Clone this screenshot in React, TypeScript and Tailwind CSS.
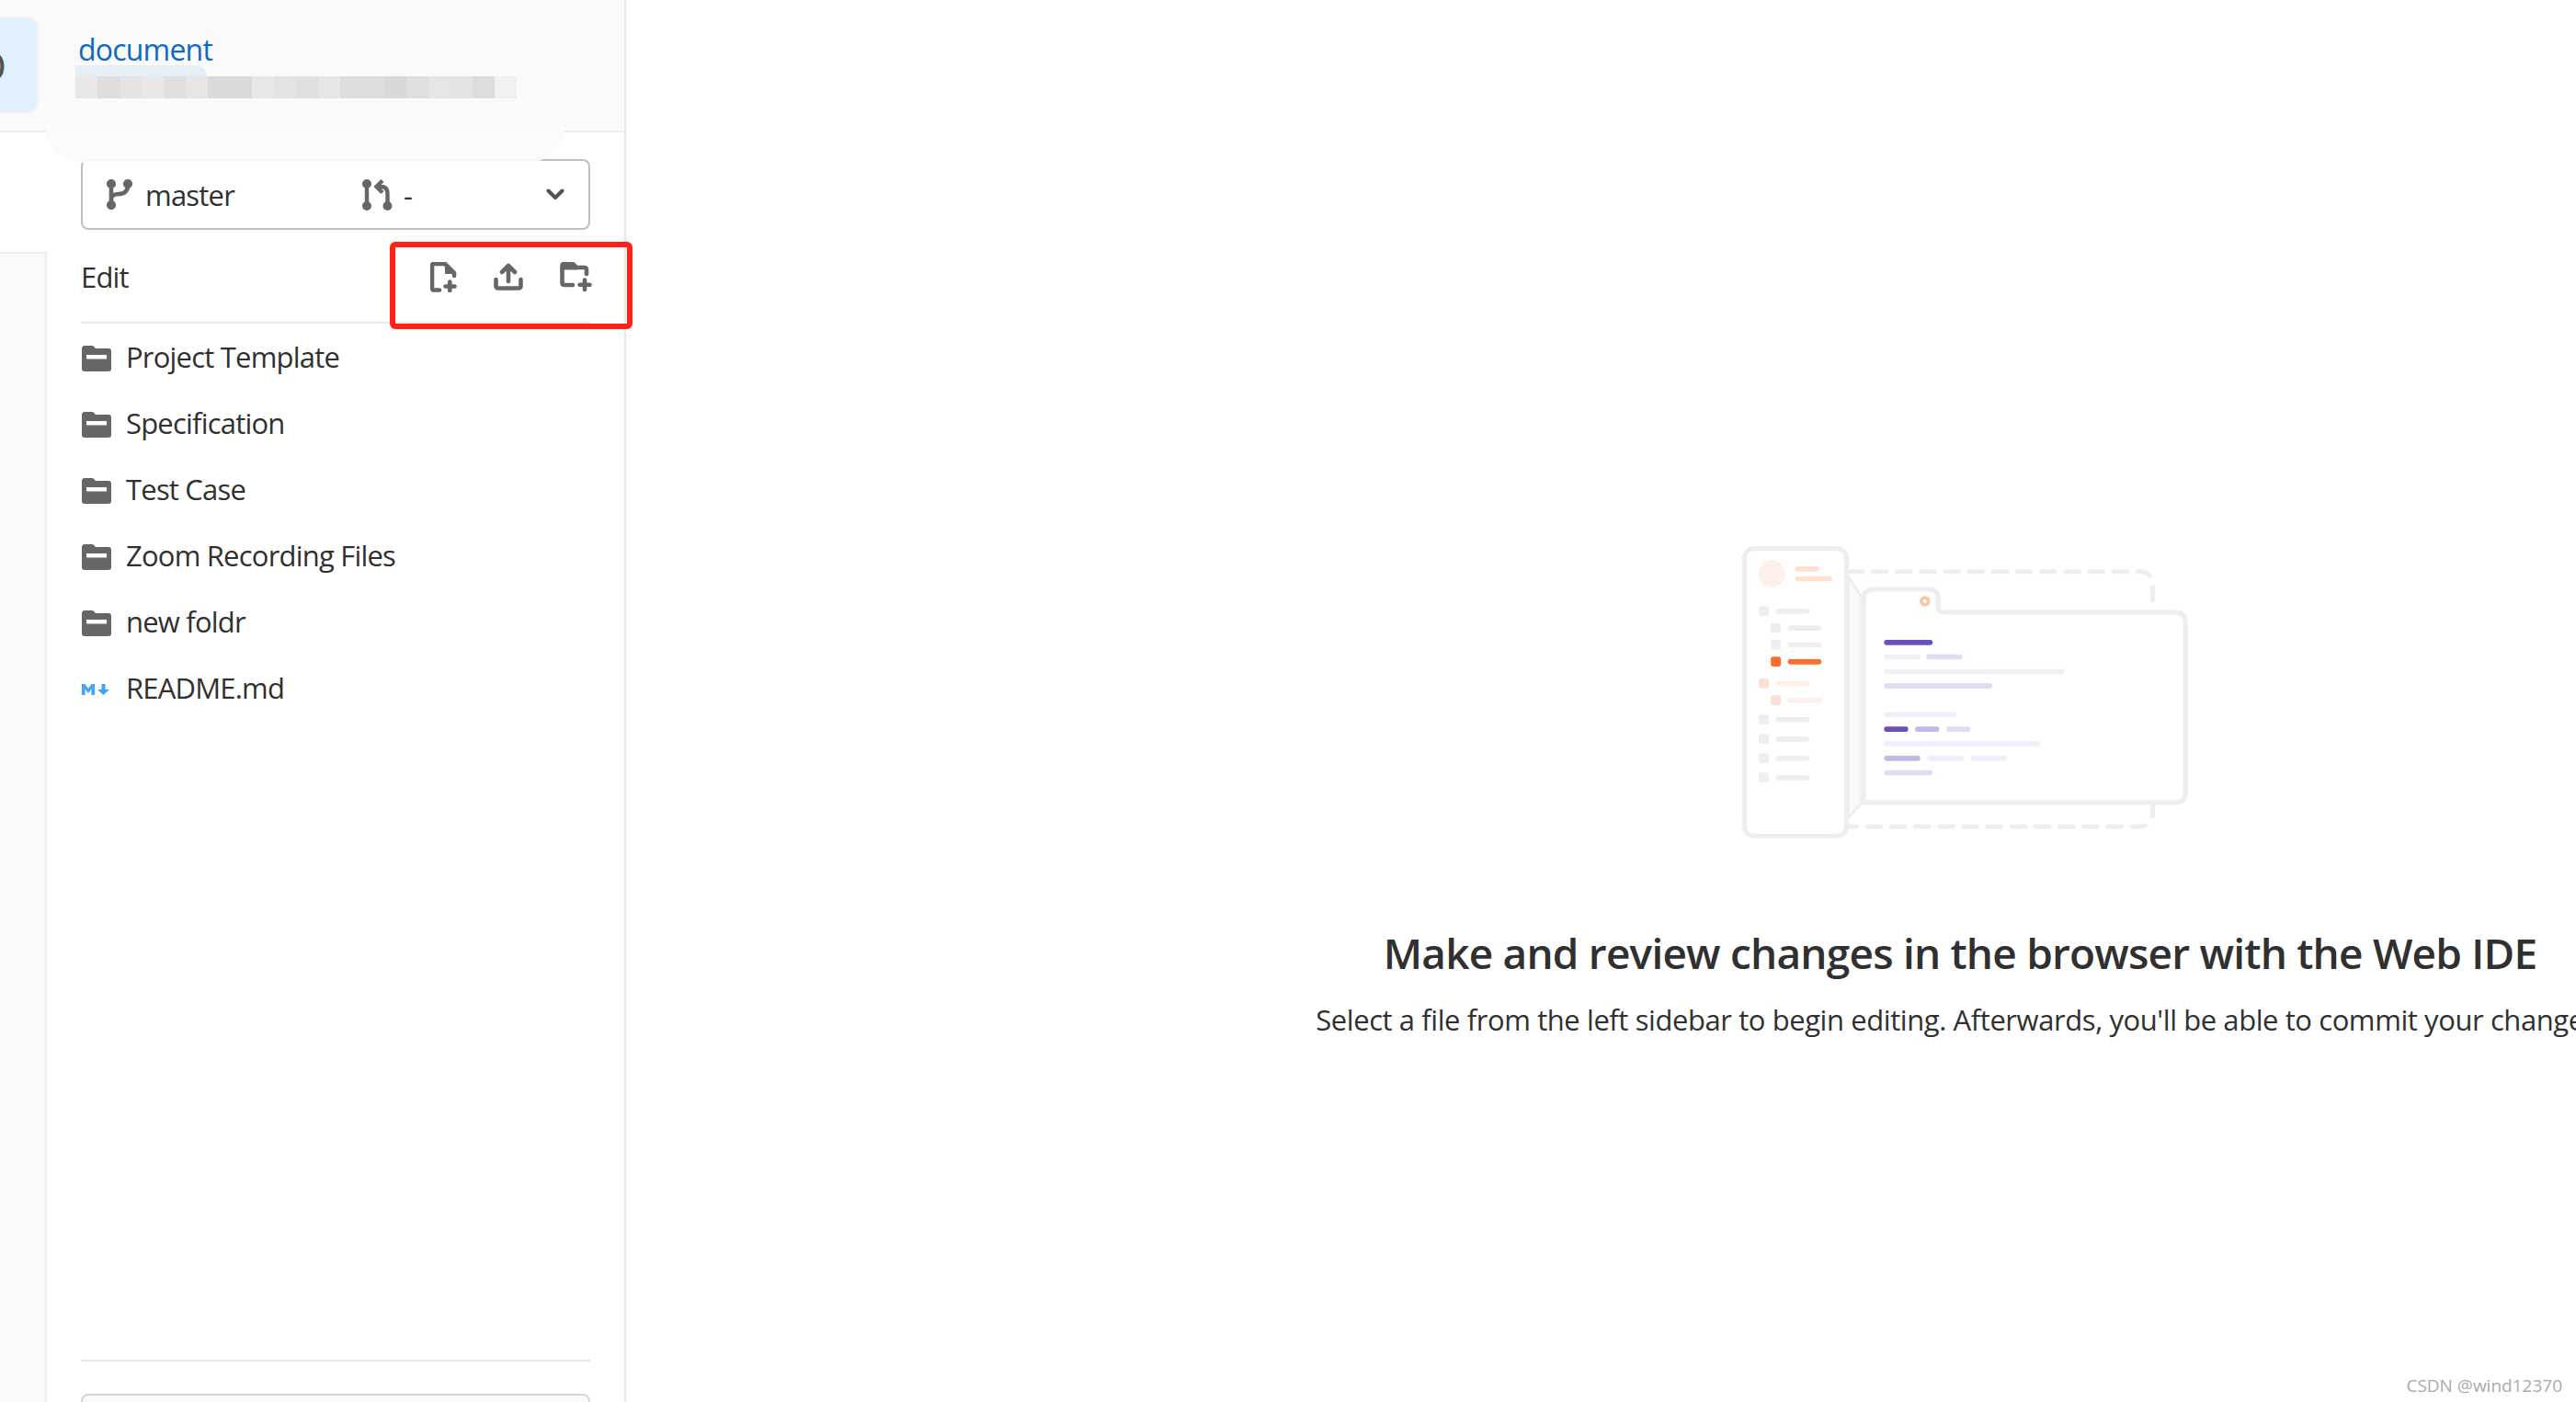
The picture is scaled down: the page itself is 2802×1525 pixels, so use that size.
const files = ['Project Template', 'Specification', 'Test Case', 'Zoom Recording Files', 'new foldr'];

const pixels = [
  '#e8e8e8', '#dedede', '#e4e4e4', '#e8e8e8', '#e0e0e0', '#e6e6e6', '#d9dadb', '#d9dadb', '#e8e8e8', '#e3e3e3',
  '#e0e0e0', '#e6e6e6', '#dddddd', '#dddddd', '#d9d8d6', '#dfdfdd', '#e5e5e3', '#e3e3e1', '#dddddb', '#f0f1f3',
];

// bars of the illustration, in the 1568x1080 space of the svg: x, y, width, colour
const bars: [number, number, number, string][] = [
  [240, 138, 76, '#fde0d3'],
  [240, 170, 117, '#fde0d3'],
  [179, 276, 106, '#eeeeee'],
  [217, 331, 106, '#eeeeee'],
  [217, 386, 106, '#eeeeee'],
  [217, 441, 106, '#ff6d2a'],
  [179, 512, 106, '#fdf0ea'],
  [217, 567, 106, '#fdf0ea'],
  [179, 630, 106, '#eeeeee'],
  [179, 693, 106, '#eeeeee'],
  [179, 756, 106, '#eeeeee'],
  [179, 819, 106, '#eeeeee'],
  [521, 378, 153, '#6b4fbb'],
  [521, 425, 114, '#f0eef9'],
  [654, 425, 114, '#e1dcf1'],
  [521, 473, 570, '#f0eef9'],
  [521, 520, 342, '#e1dcf1'],
  [521, 614, 228, '#f0eef9'],
  [521, 661, 76, '#6b4fbb'],
  [619, 661, 76, '#c3b8e3'],
  [718, 661, 76, '#e1dcf1'],
  [521, 708, 494, '#f0eef9'],
  [521, 756, 114, '#c3b8e3'],
  [658, 756, 114, '#f0eef9'],
  [795, 756, 114, '#f0eef9'],
  [521, 803, 153, '#e1dcf1'],
];

const squares: [number, number, string][] = [
  [125, 268, '#eeeeee'],
  [163, 323, '#eeeeee'],
  [163, 378, '#eeeeee'],
  [163, 433, '#ff6d2a'],
  [125, 504, '#fde0d3'],
  [163, 559, '#fde0d3'],
  [125, 622, '#eeeeee'],
  [125, 685, '#eeeeee'],
  [125, 748, '#eeeeee'],
  [125, 811, '#eeeeee'],
];

const Illustration = () => (
  <svg className="ml-[16px] h-[360px] w-[540px] shrink-0" viewBox="0 0 1568 1080" preserveAspectRatio="none" fill="none">
    <path d="M408 170L450 240V910L408 960Z" fill="#f9f9f9" stroke="#eeeeee" strokeWidth="8" />
    <path d="M410 155H1330Q1352 155 1362 172" stroke="#eeeeee" strokeWidth="15" strokeLinecap="round" strokeDasharray="42 34" />
    <path d="M1369 206V248M1369 915V953" stroke="#eeeeee" strokeWidth="15" strokeLinecap="round" />
    <path d="M410 987H1325Q1340 987 1347 983" stroke="#eeeeee" strokeWidth="15" strokeLinecap="round" strokeDasharray="42 34" strokeDashoffset="18" />
    <path
      d="M456 908V245Q456 213 488 213H662Q692 213 692 243V270Q692 288 710 288H1440Q1473 288 1473 321V875Q1473 908 1440 908Z"
      fill="#ffffff"
      stroke="#eeeeee"
      strokeWidth="15"
    />
    <rect x="80" y="80" width="322" height="938" rx="30" fill="#ffffff" stroke="#eeeeee" strokeWidth="15" />
    <ellipse cx="167" cy="162" rx="42" ry="44" fill="#fdf0ea" />
    <circle cx="650" cy="252" r="17" fill="#fdc4a7" />
    <circle cx="650" cy="252" r="6" fill="#ffffff" />
    {squares.map(([x, y, c]) => (
      <rect key={`${x}-${y}`} x={x} y={y} width="32" height="32" rx="8" fill={c} />
    ))}
    {bars.map(([x, y, w, c]) => (
      <rect key={`${x}-${y}`} x={x} y={y} width={w} height="17" rx="7" fill={c} />
    ))}
  </svg>
);

const FolderIcon = () => (
  <svg className="h-[28px] w-[32px] shrink-0" viewBox="0 0 32 28">
    <path d="M3 0H11Q13 0 14 2L15 3H29Q32 3 32 6V25Q32 28 29 28H3Q0 28 0 25V3Q0 0 3 0Z" fill="#666666" />
    <rect x="5" y="10" width="22" height="4.5" fill="#ffffff" />
  </svg>
);

const MarkdownIcon = () => (
  <svg className="h-[12px] w-[30px] shrink-0" viewBox="0 0 30 12" fill="#42a5f5">
    <path d="M0 12V0H3.5L7 5L10.5 0H14V12H10.5V5.5L7 10L3.5 5.5V12Z" />
    <path d="M21.5 0H25.5V6H30L23.5 12L17 6H21.5Z" />
  </svg>
);

const BranchIcon = () => (
  <svg className="h-[33px] w-[28px] shrink-0" viewBox="0 0 28 33" fill="none" stroke="#666666" strokeWidth="4.6">
    <path d="M5 5V28M23 5V7C23 13 19 16 13 16C8 16 5 18 5 22" />
    <circle cx="5" cy="5" r="2.8" fill="#666666" />
    <circle cx="23" cy="5" r="2.8" fill="#666666" />
    <circle cx="5" cy="28" r="2.8" fill="#666666" />
  </svg>
);

const MergeIcon = () => (
  <svg className="h-[34px] w-[33px] shrink-0" viewBox="0 0 33 34" fill="none" stroke="#666666" strokeWidth="4.4">
    <path d="M5 5V29M27.5 29V15Q27.5 8 20 8H16M22 1.5L15.5 8L22 14.5" />
    <circle cx="5" cy="5" r="2.8" fill="#666666" />
    <circle cx="5" cy="29" r="2.8" fill="#666666" />
    <circle cx="27.5" cy="29" r="2.8" fill="#666666" />
  </svg>
);

const NewFileIcon = () => (
  <svg className="h-[33px] w-[29px]" viewBox="0 0 29 33" fill="none" stroke="#666666" strokeWidth="4.6" strokeLinecap="round" strokeLinejoin="round">
    <path d="M10 30.5H4Q2 30.5 2 28.5V4Q2 2 4 2H16L26 12V15" />
    <path d="M17 3L25 12H17Z" fill="#666666" strokeWidth="2" />
    <path d="M21.3 21.5V31M16.5 26.5H26.5" />
  </svg>
);

const UploadIcon = () => (
  <svg className="h-[30px] w-[32px]" viewBox="0 0 32 30" fill="none" stroke="#666666" strokeWidth="4.6" strokeLinecap="round" strokeLinejoin="round">
    <path d="M2.5 18V25Q2.5 27.5 5 27.5H27Q29.5 27.5 29.5 25V18" />
    <path d="M16 20V3M9 10L16 3L23 10" />
  </svg>
);

const NewFolderIcon = () => (
  <svg className="h-[33px] w-[35px]" viewBox="0 0 35 33" fill="none" stroke="#666666" strokeWidth="4.6" strokeLinecap="round" strokeLinejoin="round">
    <path d="M14 25H5Q2.5 25 2.5 22.5V4.5Q2.5 2 5 2H14L18 6H26.5Q29 6 29 8.5V13" />
    <path d="M3 3H14L18 7.5H3Z" fill="#666666" strokeWidth="2" />
    <path d="M27 19.5V30M21.5 24.7H32.5" />
  </svg>
);

const Row = ({ icon, name }: { icon: React.ReactNode; name: string }) => (
  <div className="flex h-[72px] items-center">
    <div className="mt-[3px] flex w-[49px] shrink-0 items-center pl-px">{icon}</div>
    <span className="text-[31px] leading-none text-[#303030]">{name}</span>
  </div>
);

export default function App() {
  return (
    <div className="relative flex h-[1525px] w-[2802px] overflow-hidden bg-white font-['Open_Sans',sans-serif] tracking-[-0.8px]">
      <aside className="flex w-[681px] shrink-0 flex-col border-r-2 border-[#e8e8e8]">
        {/* header, the project avatar is cut by the window edge */}
        <div className="flex h-[144px] shrink-0 items-start border-b-2 border-[#eeeeee] bg-[#fafafa]">
          <div className="ml-[-70px] mt-[18px] flex h-[105px] w-[112px] shrink-0 items-center justify-center rounded-[12px] border-2 border-[#f3f3f3] bg-[#e1f0ff] pl-[8px] text-[46px] leading-none text-[#525252]">
            D
          </div>
          <div className="relative z-10 ml-[43px] flex flex-col">
            <a className="mt-[34px] text-[32px] leading-[40px] text-[#1068bf]">document</a>
            {/* pixelated name, with the pale smear above it */}
            <div className="ml-[-3px] mt-[-3px] h-[12px] w-[143px] rounded-tr-[12px] bg-[#dde8f3]/70" />
            <div className="ml-[-3px] flex h-[24px] w-[480px]">
              {pixels.map((c, i) => (
                <div key={i} className="h-full w-[24px]" style={{ background: c }} />
              ))}
            </div>
          </div>
        </div>

        <div className="flex flex-1">
          <div className="flex w-[51px] shrink-0 flex-col">
            <div className="h-[130px]" />
            <div className="flex-1 border-r-2 border-t-2 border-[#eeeeee] bg-[#fafafa]" />
          </div>
          <div className="ml-[37px] flex w-[554px] flex-col pt-[29px]">
            <div className="flex h-[77px] shrink-0 items-center rounded-[8px] border-2 border-[#bfbfbf] px-[26px]">
              <BranchIcon />
              <span className="ml-[14px] mt-[2px] text-[31px] leading-none text-[#303030]">master</span>
              <div className="ml-[139px] flex items-center">
                <MergeIcon />
                <span className="ml-[12px] mt-[2px] text-[31px] leading-none text-[#303030]">-</span>
              </div>
              <svg className="ml-auto h-[13px] w-[20px]" viewBox="0 0 20 13" fill="none" stroke="#525252" strokeWidth="4" strokeLinecap="round" strokeLinejoin="round">
                <path d="M2.5 2.5L10 10L17.5 2.5" />
              </svg>
            </div>

            <div className="flex h-[102px] shrink-0 items-center justify-between border-b-2 border-[#e8e8e8]">
              <span className="mt-[2px] text-[31px] leading-none text-[#303030]">Edit</span>
              <div className="mr-[-2px] mt-[2px] flex items-center gap-[40px]">
                <NewFileIcon />
                <UploadIcon />
                <NewFolderIcon />
              </div>
            </div>

            {files.map((name) => (
              <Row key={name} icon={<FolderIcon />} name={name} />
            ))}
            <Row icon={<MarkdownIcon />} name="README.md" />

            <div className="mt-auto h-[2px] shrink-0 bg-[#e8e8e8]" />
            <div className="mb-[-39px] mt-[35px] h-[48px] shrink-0 rounded-[8px] border-2 border-[#d5d5d5] bg-[#fafafa]" />
          </div>
        </div>
      </aside>

      <main className="min-w-0 flex-1 overflow-hidden">
        <div className="flex w-[2902px] flex-col items-center pt-[570px] text-[#303030]">
          <Illustration />
          <h1 className="mt-[76px] whitespace-nowrap text-[46px] font-semibold leading-[60px] tracking-[-0.8px]">
            Make and review changes in the browser with the Web IDE
          </h1>
          <p className="mt-[23px] whitespace-nowrap text-[31px] leading-[40px] tracking-[-0.42px]">
            Select a file from the left sidebar to begin editing. Afterwards, you'll be able to commit your changes.
          </p>
        </div>
      </main>

      {/* smear left over from hiding the project name */}
      <div className="absolute left-[49px] top-[135px] h-[42px] w-[565px] rounded-b-[40px] bg-[#fbfbfb]/90" />
      {/* hand drawn annotation */}
      <div className="absolute left-[424px] top-[263px] h-[95px] w-[264px] rounded-[6px] border-[6px] border-[#ff2216]" />
      <span className="absolute bottom-[6px] right-[15px] text-[19px] leading-[24px] tracking-normal text-[#aaaaaa]">CSDN @wind12370</span>
    </div>
  );
}
